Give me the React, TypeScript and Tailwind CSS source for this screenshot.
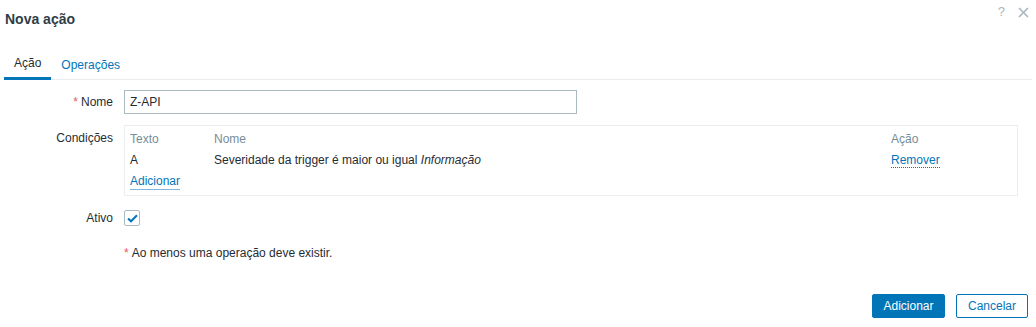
export default function App() {
  return (
    <div className="relative w-[1036px] h-[327px] bg-white text-[12px] text-[#1f2c33] font-['Liberation_Sans',Arial,sans-serif] overflow-hidden">
      {/* Header */}
      <div className="flex items-start justify-between h-[38px] pl-[5px] pr-[7px]">
        <h4 className="mt-[10px] text-[14px] leading-[18px] font-bold text-[#2f3d48]">Nova ação</h4>
        <div className="flex items-center gap-[13px] mt-[5px] text-[#a9b6bd]">
          <span className="text-[13px] leading-[14px]">?</span>
          <svg width="11" height="11" viewBox="0 0 11 11" className="stroke-[#a9b6bd]">
            <path d="M1 1L10 10M10 1L1 10" strokeWidth="1.6" fill="none" />
          </svg>
        </div>
      </div>

      {/* Tabs */}
      <div className="mt-[10px] mx-[4px] flex h-[32px] border-b border-[#ebeef0]">
        <div className="px-[10px] h-[32px] flex items-center border-b-[3px] border-[#0275b8] -mb-px pt-[1px]">Ação</div>
        <div className="px-[10px] h-[32px] flex items-center pt-[1px] text-[#0275b8]">Operações</div>
      </div>

      {/* Form */}
      <div className="mt-[10px] flex flex-col">
        <div className="flex items-center h-[24px]">
          <div className="w-[113px] text-right">
            <span className="text-[#e45959] mr-[3px]">*</span>Nome
          </div>
          <div className="ml-[11px] w-[453px] h-[24px] border border-[#acbbc2] px-[5px] flex items-center">Z-API</div>
        </div>

        <div className="flex mt-[11px]">
          <div className="w-[113px] text-right pt-[4px]">Condições</div>
          <div className="ml-[11px] w-[894px] h-[71px] border border-[#ebeef0] px-[5px] pt-[2px]">
            <div className="flex h-[21px] items-center text-[#768d99]">
              <div className="w-[84px]">Texto</div>
              <div className="w-[677px]">Nome</div>
              <div>Ação</div>
            </div>
            <div className="flex h-[21px] items-center">
              <div className="w-[84px]">A</div>
              <div className="w-[677px]">
                Severidade da trigger é maior ou igual <i>Informação</i>
              </div>
              <div>
                <span className="text-[#0275b8] border-b border-dotted border-[#0275b8] leading-[14px]">Remover</span>
              </div>
            </div>
            <div className="flex h-[24px] items-center">
              <span className="text-[#0275b8] border-b border-[#7fb6dc] leading-[14px] pb-px">Adicionar</span>
            </div>
          </div>
        </div>

        <div className="flex items-center mt-[14px] h-[16px]">
          <div className="w-[113px] text-right">Ativo</div>
          <div className="ml-[11px] w-[16px] h-[16px] border border-[#acbbc2] rounded-[2px] flex items-center justify-center">
            <svg width="11" height="9" viewBox="0 0 11 9">
              <path d="M1 4.5L4 7.3L10 1.3" stroke="#0275b8" strokeWidth="2" fill="none" />
            </svg>
          </div>
        </div>

        <div className="mt-[20px] ml-[124px] h-[14px] leading-[14px]">
          <span className="text-[#e45959] mr-[3px]">*</span>Ao menos uma operação deve existir.
        </div>
      </div>

      {/* Footer */}
      <div className="absolute right-[8px] bottom-[9px] flex gap-[11px]">
        <button className="w-[73px] h-[24px] bg-[#0275b8] text-white rounded-[2px] border border-[#0275b8]">Adicionar</button>
        <button className="w-[72px] h-[24px] bg-white text-[#0275b8] rounded-[2px] border border-[#0275b8]">Cancelar</button>
      </div>
    </div>
  )
}
